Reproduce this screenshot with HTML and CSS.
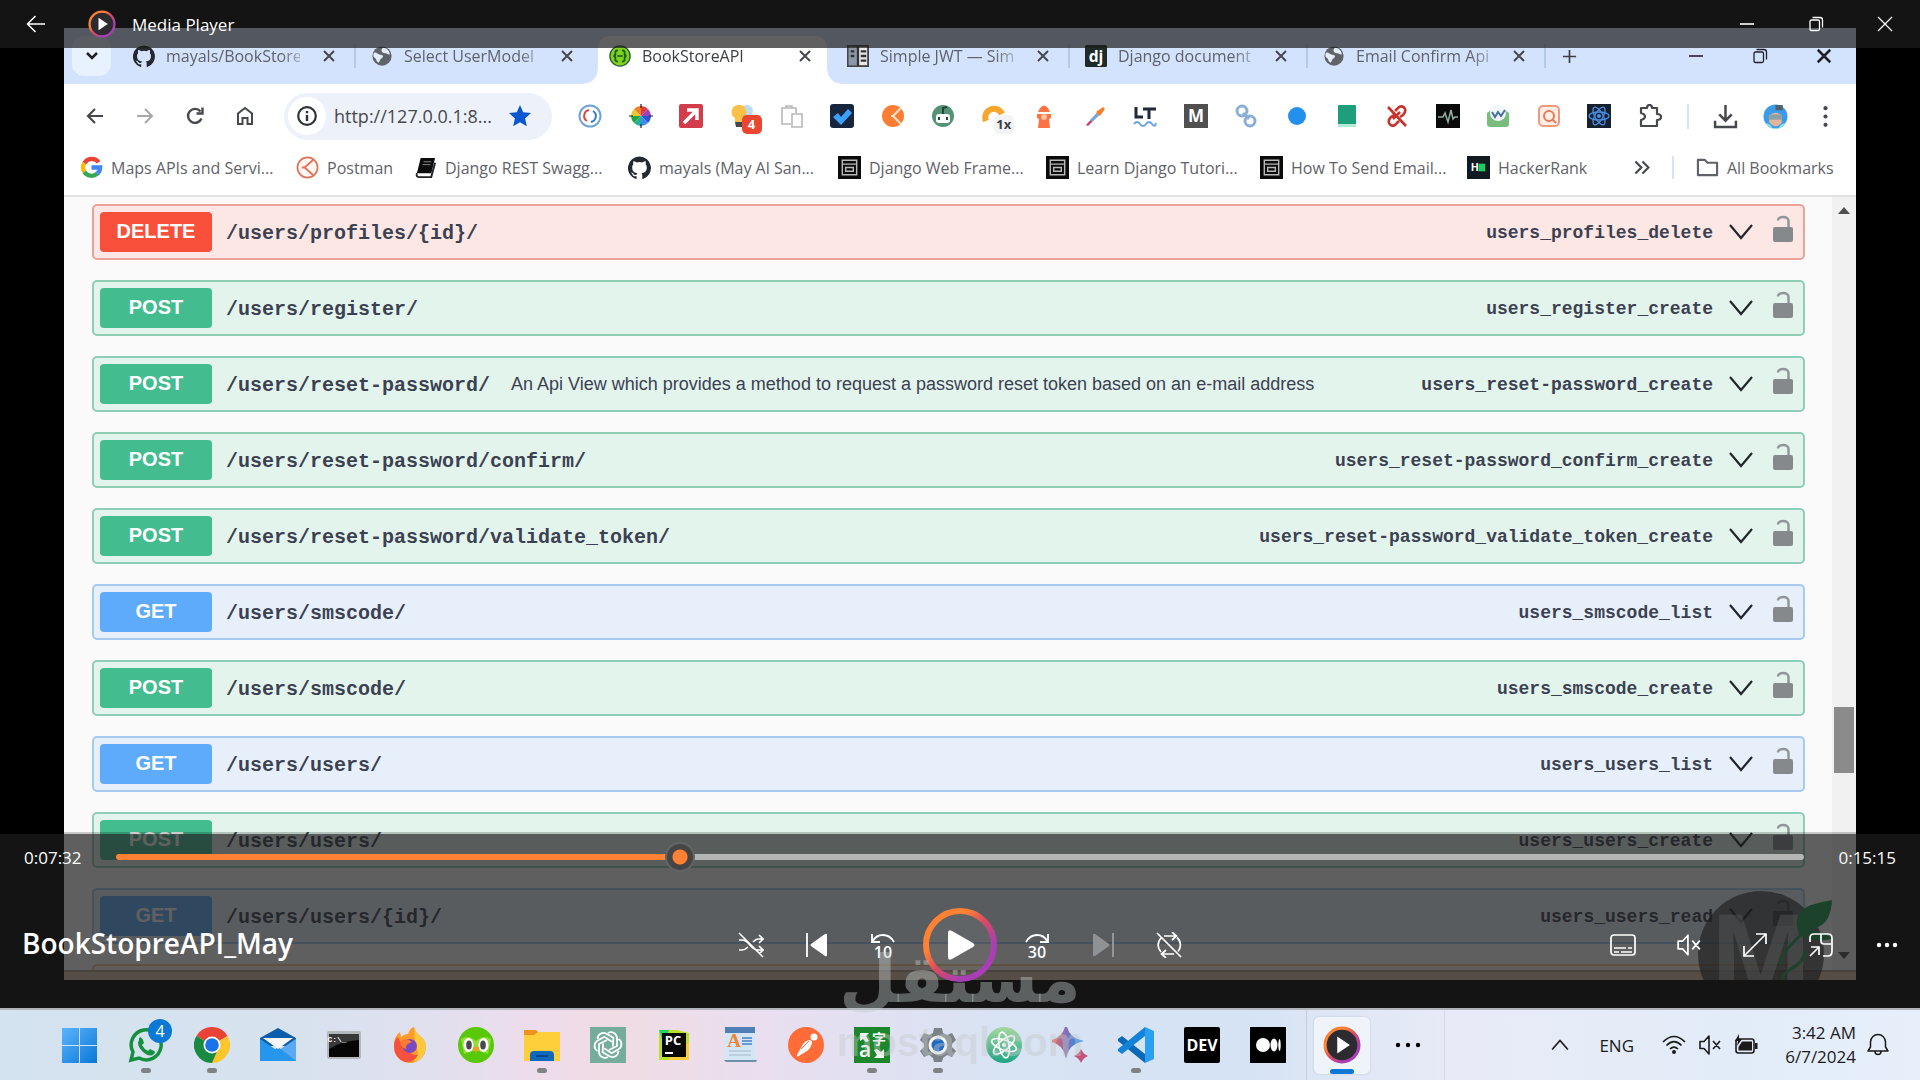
FILE: index.html
```
<!DOCTYPE html>
<html lang="en">
<head>
  <meta charset="UTF-8">
  <meta name="viewport" content="width=device-width, initial-scale=1">
  <title>Media Player</title>
  <link rel="stylesheet" href="styles.css">
</head>
<body>

  <!-- shared icons -->
  <svg class="defs" aria-hidden="true">
    <defs>
      <linearGradient id="ring" x1="0" y1="0" x2="1" y2="1">
        <stop offset="0.3" stop-color="#ff8133"/>
        <stop offset="0.5" stop-color="#d94a62"/>
        <stop offset="0.75" stop-color="#a83fb5"/>
      </linearGradient>
      <linearGradient id="gem" x1="0" y1="0" x2="1" y2="0">
        <stop offset="0" stop-color="#f0624f"/>
        <stop offset="0.5" stop-color="#8470b4"/>
        <stop offset="1" stop-color="#2391f0"/>
      </linearGradient>
      <linearGradient id="atomBg" x1="0" y1="0" x2="0" y2="1">
        <stop offset="0" stop-color="#a6d8a0"/>
        <stop offset="1" stop-color="#1fa585"/>
      </linearGradient>
      <linearGradient id="winBg" x1="0" y1="0" x2="1" y2="1">
        <stop offset="0" stop-color="#5bb4ff"/>
        <stop offset="1" stop-color="#0a78d4"/>
      </linearGradient>
      <symbol id="close" viewBox="0 0 16 16"><path d="M3 3l10 10M13 3L3 13" fill="none" stroke="currentColor" stroke-width="2"/></symbol>
      <symbol id="github" viewBox="0 0 24 24"><path fill="#24292f" d="M12 .5a12 12 0 0 0-3.8 23.4c.6.1.8-.3.8-.6v-2.2c-3.3.7-4-1.4-4-1.4-.6-1.4-1.3-1.8-1.3-1.8-1.1-.7.1-.7.1-.7 1.2.1 1.8 1.2 1.8 1.2 1.1 1.8 2.8 1.3 3.5 1 .1-.8.4-1.3.8-1.6-2.7-.3-5.5-1.3-5.5-5.9 0-1.3.5-2.4 1.2-3.2-.1-.3-.5-1.5.1-3.2 0 0 1-.3 3.3 1.2a11.500 11.500 0 0 1 6 0c2.3-1.5 3.3-1.2 3.3-1.2.6 1.7.2 2.9.1 3.2.8.8 1.2 1.9 1.2 3.2 0 4.6-2.8 5.6-5.5 5.9.4.4.8 1.1.8 2.2v3.300c0 .3.200.7.8.6A12 12 0 0 0 12 .5z"/></symbol>
      <symbol id="globe" viewBox="0 0 24 24"><circle cx="12" cy="12" r="10.5" fill="#5f6368"/><path d="M4 8c3 1 5 3 8 3 2 1 1 3-1 4s-1 4-3 4-2-4-4-5-2-4 0-6zM13 3c4 0 7 3 7.5 7-2 1-3-1-5-1s-4-1-4-3 1-2 1.500-3z" fill="#e3ecfb"/></symbol>
      <symbol id="window" viewBox="0 0 24 24"><rect width="24" height="24" fill="#0b0b0b"/><path d="M4.5 4.5h15v15h-15zM4.5 8.5h15M8 12h8v4H8z" fill="none" stroke="#b9b9b9" stroke-width="1.5"/></symbol>
      <symbol id="chevron" viewBox="0 0 24 24"><path d="M1 5l11 13L23 5" fill="none" stroke="#22262b" stroke-width="2.2"/></symbol>
      <symbol id="lock" viewBox="0 0 22 28"><path d="M6 5.5C6 1 16.500.5 16.5 6v6" fill="none" stroke="#8f9598" stroke-width="2.5"/><rect x="1" y="12" width="20" height="15" rx="2" fill="#85898c"/></symbol>
      <symbol id="player" viewBox="0 0 36 36"><circle cx="18" cy="18" r="16" fill="#2b2b30" stroke="url(#ring)" stroke-width="3"/><path d="M13.5 10v16l12-8z" fill="#fff"/></symbol>
      <symbol id="mute" viewBox="0 0 24 24"><path d="M2 8.5h4l5-5.500v18l-5-5.500H2zM15 8l7 8M22 8l-7 8" fill="none" stroke="currentColor" stroke-width="1.6" stroke-linejoin="round"/></symbol>
      <symbol id="restore" viewBox="0 0 16 16"><path d="M2 5.5q0-1.500 1.500-1.500H10q1.500 0 1.500 1.500V13q0 1.500-1.500 1.500H3.5Q2 14.500 2 13zM4.500 1.500H12q2.500 0 2.500 2.500v7.500" fill="none" stroke="currentColor" stroke-width="1.3"/></symbol>
      <symbol id="min" viewBox="0 0 16 16"><path d="M1 8h14" stroke="currentColor" stroke-width="1.6"/></symbol>
    </defs>
  </svg>

  <main class="player">
    <section class="video">
      <div class="tabstrip">
        <button class="tab-search" aria-label="Search tabs"><svg viewBox="0 0 16 16"><path d="M3 5l5 5 5-5" fill="none" stroke="#202124" stroke-width="2.5"/></svg></button>
        <div class="tabs">
          <div class="tab"><svg><use href="#github"/></svg><span>mayals/BookStore/</span><button aria-label="Close tab"><svg><use href="#close"/></svg></button></div>
          <div class="tab no-sep"><svg><use href="#globe"/></svg><span>Select UserModel f</span><button aria-label="Close tab"><svg><use href="#close"/></svg></button></div>
          <div class="tab active"><svg viewBox="0 0 24 24"><circle cx="12" cy="12" r="11" fill="#7ed321" stroke="#2e5a2e" stroke-width="1.5"/><path d="M9 6q-2.500 0-2 3 .3 2.500-2 3 2.300.5 2 3-.5 3 2 3M15 6q2.500 0 2 3-.3 2.500 2 3-2.300.5-2 3 .5 3-2 3M10 12h.1M12 12h.1M14 12h.1" fill="none" stroke="#1d5c1d" stroke-width="2" stroke-linecap="round"/></svg><span>BookStoreAPI</span><button aria-label="Close tab"><svg><use href="#close"/></svg></button></div>
          <div class="tab"><svg viewBox="0 0 24 24"><rect x="1" y="1" width="22" height="22" fill="#e8e8e8" stroke="#444" stroke-width="2"/><path d="M2 2h9v20H2z" fill="#8e97a8"/><path d="M12 1v22M4 7h4M4 12h4M15 7h6M15 12h6M15 17h6" stroke="#333" stroke-width="2.5"/></svg><span>Simple JWT — Simp</span><button aria-label="Close tab"><svg><use href="#close"/></svg></button></div>
          <div class="tab"><svg viewBox="0 0 24 24"><rect width="24" height="24" rx="2" fill="#1d2a27"/><text x="12" y="18" class="icon-text" font-size="17" fill="#fff">dj</text></svg><span>Django document.</span><button aria-label="Close tab"><svg><use href="#close"/></svg></button></div>
          <div class="tab"><svg><use href="#globe"/></svg><span>Email Confirm Api</span><button aria-label="Close tab"><svg><use href="#close"/></svg></button></div>
          <button class="new-tab" aria-label="New tab"><svg viewBox="0 0 16 16"><path d="M8 1v14M1 8h14" stroke="#3c4043" stroke-width="1.8"/></svg></button>
        </div>
        <div class="chrome-controls">
          <button aria-label="Minimize browser"><svg><use href="#min"/></svg></button>
          <button aria-label="Restore browser"><svg><use href="#restore"/></svg></button>
          <button aria-label="Close browser"><svg><use href="#close"/></svg></button>
        </div>
      </div>

      <div class="toolbar">
        <div class="nav">
          <button aria-label="Back"><svg viewBox="0 0 20 20"><path d="M18 10H3M10 3l-7 7 7 7" fill="none" stroke="#45494d" stroke-width="2.2"/></svg></button>
          <button aria-label="Forward"><svg viewBox="0 0 20 20"><path d="M2 10h15M10 3l7 7-7 7" fill="none" stroke="#a6a9ac" stroke-width="2"/></svg></button>
          <button aria-label="Reload"><svg viewBox="0 0 20 20"><path d="M16.5 12.5A7 7 0 1 1 15.5 5.5M17.5 1.5v6h-6" fill="none" stroke="#45494d" stroke-width="2.4"/></svg></button>
          <button aria-label="Home"><svg viewBox="0 0 20 20"><path d="M3 18V7.5L10 2l7 5.500V18h-4.500v-6h-5v6z" fill="none" stroke="#45494d" stroke-width="2"/></svg></button>
        </div>
        <div class="address">
          <span class="site-info"><svg viewBox="0 0 20 20"><circle cx="10" cy="10" r="8" fill="none" stroke="#303336" stroke-width="2"/><path d="M10 9v5.500M10 5.500v2" stroke="#303336" stroke-width="2.2"/></svg></span>
          <input type="text" value="http://127.0.0.1:8..." aria-label="Address">
          <svg class="star" viewBox="0 0 24 24"><path d="M12 1l3.200 7.300 7.800.8-5.900 5.300 1.700 7.800-6.800-4-6.800 4 1.700-7.800L1 9.100l7.800-.8z" fill="#0b57d0"/></svg>
        </div>
        <div class="extensions">
          <svg viewBox="0 0 24 24"><circle cx="12" cy="12" r="10.5" fill="#fff" stroke="#6fa3d6" stroke-width="2"/><path d="M11 6a6 6 0 0 0-2 11" fill="none" stroke="#d84a3c" stroke-width="2"/><path d="M13 18a6 6 0 0 0 2-11" fill="none" stroke="#3579c4" stroke-width="2"/></svg>
          <svg viewBox="0 0 24 24"><path d="M12 12V2a10 10 0 0 1 7 3z" fill="#e23b3b"/><path d="M12 12l7-7a10 10 0 0 1 3 7z" fill="#9c3fc0"/><path d="M12 12h10a10 10 0 0 1-3 7z" fill="#2b55d8"/><path d="M12 12l7 7a10 10 0 0 1-7 3z" fill="#3a8ef0"/><path d="M12 12v10a10 10 0 0 1-7-3z" fill="#25b1a0"/><path d="M12 12l-7 7a10 10 0 0 1-3-7z" fill="#2aa53a"/><path d="M12 12H2a10 10 0 0 1 3-7z" fill="#e9c92f"/><path d="M12 12L5 5a10 10 0 0 1 7-3z" fill="#f2802a"/><path d="M12 0v4M12 20v4M0 12h4M20 12h4" stroke="#222" stroke-width="1.2"/></svg>
          <svg viewBox="0 0 24 24"><rect width="24" height="24" rx="2" fill="#d23c4b"/><path d="M5 19L17 7M8 6h10v10" fill="none" stroke="#fff" stroke-width="3.5"/></svg>
          <span class="badged"><svg viewBox="0 0 24 24"><circle cx="17" cy="7" r="6" fill="#bcdcf3"/><path d="M9 1a7 7 0 0 1 4 13v4H5v-4A7 7 0 0 1 9 1z" fill="#fbc04a"/><path d="M5 18h8v5H6z" fill="#44474c"/></svg><b>4</b></span>
          <svg viewBox="0 0 24 24"><path d="M11 20H2V4h14v5M6 4V2h6v2M12 10h10v13H12z" fill="none" stroke="#b8b8b8" stroke-width="1.6"/></svg>
          <svg viewBox="0 0 24 24"><rect width="24" height="24" rx="3" fill="#18263d"/><path d="M3 13l5-4 3 4 7-8 4 4-11 12z" fill="#3da0ff"/></svg>
          <svg viewBox="0 0 24 24"><circle cx="12" cy="12" r="11" fill="#ff7d33"/><path d="M20 4l-8 8 8 8M12 12h-2" fill="none" stroke="#ffe3d0" stroke-width="2"/></svg>
          <svg viewBox="0 0 24 24"><circle cx="12" cy="12" r="11" fill="#559377"/><rect x="5" y="10" width="14" height="9" rx="3" fill="#fff"/><path d="M12 10V4l4-1M8 13v3M16 13v3" fill="none" stroke="#26433a" stroke-width="2"/></svg>
          <span class="badged light"><svg viewBox="0 0 24 24"><path d="M4 17a8.500 8.500 0 1 1 16-7" fill="none" stroke="#f7a52c" stroke-width="6"/></svg><b>1x</b></span>
          <svg viewBox="0 0 24 24"><path d="M8 4q4-5 8 0l2 4H6zM5 10h14v4l-2 1 1 9H6l1-9-2-1z" fill="#fb7344"/><circle cx="12" cy="13" r="3" fill="#ffc19a"/></svg>
          <svg viewBox="0 0 24 24"><path d="M3 21L14 9l2 2L5 22z" fill="#d4356b"/><path d="M7 16l7-7 2 2-7 7z" fill="#74a7d8"/><path d="M13 8l7-5 2 2-5 7z" fill="#f1812a"/></svg>
          <svg viewBox="0 0 24 24"><path d="M3 3v10h7M10 5h13M16 5v10" fill="none" stroke="#1f2937" stroke-width="3"/><path d="M1 20q3-4 6 0t6 0 6 0 4-1" fill="none" stroke="#6aa5e3" stroke-width="2"/></svg>
          <svg viewBox="0 0 24 24"><rect width="24" height="24" fill="#505050"/><text x="12" y="18" class="icon-text" font-size="17" fill="#fff">M</text></svg>
          <svg viewBox="0 0 24 24"><circle cx="8" cy="7" r="5" fill="none" stroke="#8aaed6" stroke-width="3"/><circle cx="16" cy="17" r="5" fill="none" stroke="#8aaed6" stroke-width="3"/><path d="M9 9l6 6" stroke="#8aaed6" stroke-width="3"/></svg>
          <svg viewBox="0 0 24 24"><circle cx="12" cy="12" r="9" fill="#2490ee"/></svg>
          <svg viewBox="0 0 24 24"><rect x="3" y="1" width="18" height="22" rx="1" fill="#1d9f7c"/><path d="M3 20h18v3H3z" fill="#b3ead6"/></svg>
          <svg viewBox="0 0 24 24"><path d="M10 7l4-4q4-2 6 2 1 3-2 6l-3 2M14 17l-4 4q-4 2-6-2-1-3 2-6l3-2M8 15l7-7M3 3l18 19" fill="none" stroke="#c5332b" stroke-width="2.6"/></svg>
          <svg viewBox="0 0 24 24"><rect width="24" height="24" fill="#0a0a0a"/><path d="M2 13h5l2-4 3 9 3-12 2 9 2-2h3" fill="none" stroke="#8fb3a0" stroke-width="1.5"/></svg>
          <svg viewBox="0 0 24 24"><path d="M1 9l11-8 11 8v11q0 3-3 3H4q-3 0-3-3z" fill="#79bd7c"/><circle cx="12" cy="9" r="8" fill="#f0f6fa"/><path d="M6 8l3 5 3-5 3 4 4-6" fill="none" stroke="#4a6f9d" stroke-width="2"/></svg>
          <svg viewBox="0 0 24 24"><rect x="2" y="2" width="20" height="20" rx="4" fill="#fff0e6" stroke="#f09a80" stroke-width="2"/><circle cx="12" cy="12" r="5" fill="none" stroke="#e8795f" stroke-width="2"/><path d="M15 15l4 4" stroke="#e8795f" stroke-width="2"/></svg>
          <svg viewBox="0 0 24 24"><rect width="24" height="24" fill="#16202e"/><g fill="none" stroke="#4a91e8" stroke-width="1.3"><ellipse cx="12" cy="12" rx="10" ry="4"/><ellipse cx="12" cy="12" rx="10" ry="4" transform="rotate(60 12 12)"/><ellipse cx="12" cy="12" rx="10" ry="4" transform="rotate(120 12 12)"/></g><circle cx="12" cy="12" r="2" fill="#4a91e8"/></svg>
          <svg viewBox="0 0 24 24"><path d="M3 4h6q0-3 2.500-3T14 4h5v6q4 0 4 3t-4 3v6H3v-6q4-1 4-3.500T3 9z" fill="none" stroke="#45494d" stroke-width="2.2" stroke-linejoin="round"/></svg>
        </div>
        <div class="chrome-right">
          <svg viewBox="0 0 24 24"><path d="M12 1v14M6 10l6 6 6-6M2 16v6h20v-6" fill="none" stroke="#45494d" stroke-width="2.4"/></svg>
          <svg viewBox="0 0 24 24"><circle cx="12" cy="12" r="11.5" fill="#3b9be8"/><path d="M6 11q6-5 12 0v7q-6 7-12 0z" fill="#e2b49c"/><path d="M6 10h12v5H6z" fill="#8aa0a3"/><path d="M12 1h7v5h-7z" fill="#50616d"/><path d="M2 18q5 1 7 5h6q2-4 7-5-3 6-10 6T2 18z" fill="#8be0e8"/></svg>
          <svg viewBox="0 0 24 24"><circle cx="12" cy="4" r="2" fill="#45494d"/><circle cx="12" cy="12" r="2" fill="#45494d"/><circle cx="12" cy="20" r="2" fill="#45494d"/></svg>
        </div>
      </div>

      <nav class="bookmarks">
        <a href="#"><svg viewBox="0 0 24 24"><g fill="none" stroke-width="4.5"><path d="M19.5 6.5A9 9 0 0 0 4.5 7.5" stroke="#ea4335"/><path d="M4.5 7.5a9 9 0 0 0 0 9" stroke="#fbbc05"/><path d="M4.5 16.5a9 9 0 0 0 13.500 2" stroke="#34a853"/><path d="M18 18.500q3-2.500 3-6.500h-9" stroke="#4285f4"/></g></svg><span>Maps APIs and Servi...</span></a>
        <a href="#"><svg viewBox="0 0 24 24"><circle cx="12" cy="12" r="10.5" fill="#fff7f3" stroke="#e0735a" stroke-width="1.8"/><path d="M18 4l-9 8 9 8M9 12H6" fill="none" stroke="#e0735a" stroke-width="2"/></svg><span>Postman</span></a>
        <a href="#"><svg viewBox="0 0 24 24"><path d="M7 2h15l-4 16H3z" fill="#0c0c0c"/><path d="M3 18q-1 4 2 4h13l4-15" fill="none" stroke="#222" stroke-width="2"/><path d="M10 6h8M9 9h8" stroke="#888"/></svg><span>Django REST Swagg...</span></a>
        <a href="#"><svg><use href="#github"/></svg><span>mayals (May Al San...</span></a>
        <a href="#"><svg><use href="#window"/></svg><span>Django Web Frame...</span></a>
        <a href="#"><svg><use href="#window"/></svg><span>Learn Django Tutori...</span></a>
        <a href="#"><svg><use href="#window"/></svg><span>How To Send Email...</span></a>
        <a href="#"><svg viewBox="0 0 24 24"><rect width="24" height="24" fill="#101a20"/><text x="8" y="16" class="icon-text" font-size="11" fill="#fff">H</text><rect x="12" y="8" width="7" height="8" fill="#1ecb5f"/></svg><span>HackerRank</span></a>
        <button aria-label="More bookmarks"><svg viewBox="0 0 16 16"><path d="M2 3l5 5-5 5M8 3l5 5-5 5" fill="none" stroke="#45494d" stroke-width="1.8"/></svg></button>
        <a href="#" class="all"><svg viewBox="0 0 24 24"><path d="M2 4h7l3 3h10v13H2z" fill="none" stroke="#5f6368" stroke-width="2.2" stroke-linejoin="round"/></svg><span>All Bookmarks</span></a>
      </nav>

      <div class="page">
        <div class="operations">
          <div class="op delete"><span class="method">DELETE</span><span class="path">/users/profiles/{id}/</span><span class="op-id">users_profiles_delete</span><button aria-label="Expand"><svg><use href="#chevron"/></svg></button><button class="auth" aria-label="Authorize"><svg><use href="#lock"/></svg></button></div>
          <div class="op post"><span class="method">POST</span><span class="path">/users/register/</span><span class="op-id">users_register_create</span><button aria-label="Expand"><svg><use href="#chevron"/></svg></button><button class="auth" aria-label="Authorize"><svg><use href="#lock"/></svg></button></div>
          <div class="op post"><span class="method">POST</span><span class="path">/users/reset-password/</span><span class="desc">An Api View which provides a method to request a password reset token based on an e-mail address</span><span class="op-id">users_reset-password_create</span><button aria-label="Expand"><svg><use href="#chevron"/></svg></button><button class="auth" aria-label="Authorize"><svg><use href="#lock"/></svg></button></div>
          <div class="op post"><span class="method">POST</span><span class="path">/users/reset-password/confirm/</span><span class="op-id">users_reset-password_confirm_create</span><button aria-label="Expand"><svg><use href="#chevron"/></svg></button><button class="auth" aria-label="Authorize"><svg><use href="#lock"/></svg></button></div>
          <div class="op post"><span class="method">POST</span><span class="path">/users/reset-password/validate_token/</span><span class="op-id">users_reset-password_validate_token_create</span><button aria-label="Expand"><svg><use href="#chevron"/></svg></button><button class="auth" aria-label="Authorize"><svg><use href="#lock"/></svg></button></div>
          <div class="op get"><span class="method">GET</span><span class="path">/users/smscode/</span><span class="op-id">users_smscode_list</span><button aria-label="Expand"><svg><use href="#chevron"/></svg></button><button class="auth" aria-label="Authorize"><svg><use href="#lock"/></svg></button></div>
          <div class="op post"><span class="method">POST</span><span class="path">/users/smscode/</span><span class="op-id">users_smscode_create</span><button aria-label="Expand"><svg><use href="#chevron"/></svg></button><button class="auth" aria-label="Authorize"><svg><use href="#lock"/></svg></button></div>
          <div class="op get"><span class="method">GET</span><span class="path">/users/users/</span><span class="op-id">users_users_list</span><button aria-label="Expand"><svg><use href="#chevron"/></svg></button><button class="auth" aria-label="Authorize"><svg><use href="#lock"/></svg></button></div>
          <div class="op post"><span class="method">POST</span><span class="path">/users/users/</span><span class="op-id">users_users_create</span><button aria-label="Expand"><svg><use href="#chevron"/></svg></button><button class="auth" aria-label="Authorize"><svg><use href="#lock"/></svg></button></div>
          <div class="op get"><span class="method">GET</span><span class="path">/users/users/{id}/</span><span class="op-id">users_users_read</span><button aria-label="Expand"><svg><use href="#chevron"/></svg></button><button class="auth" aria-label="Authorize"><svg><use href="#lock"/></svg></button></div>
          <div class="op put"></div>
        </div>
        <div class="scrollbar">
          <svg viewBox="0 0 12 8"><path d="M0 8l6-7 6 7z" fill="#505050"/></svg>
          <div class="scroll-thumb"></div>
          <svg viewBox="0 0 12 8"><path d="M0 0l6 7 6-7z" fill="#505050"/></svg>
        </div>
      </div>
      <div class="video-edge"></div>

      <svg class="monogram" viewBox="0 0 144 90">
        <circle cx="66" cy="64" r="63" fill="#15171a" fill-opacity="0.62"/>
        <text x="66" y="103" class="icon-text" font-size="110" fill="#d8dadc" fill-opacity="0.5">M</text>
        <path d="M104 44q-8-22 12-29 9-3 21-5-1 22-14 27-3 1-6 3 11 3 22 8-12 4-24 1-7-1-11-5z" fill="#1c9a50"/>
        <path d="M106 45q-22 20-21 30M110 61q0 10-14 18-10 6-9 12" fill="none" stroke="#1c9a50" stroke-width="3"/>
      </svg>
    </section>

    <header class="titlebar">
      <button class="back" aria-label="Back"><svg viewBox="0 0 20 20"><path d="M19 10H2M9.5 2L1.5 10l8 8" fill="none" stroke="#fff" stroke-width="1.5"/></svg></button>
      <svg class="app-logo"><use href="#player"/></svg>
      <span class="app-name">Media Player</span>
      <div class="window-controls">
        <button aria-label="Minimize"><svg><use href="#min"/></svg></button>
        <button aria-label="Restore"><svg><use href="#restore"/></svg></button>
        <button aria-label="Close"><svg viewBox="0 0 16 16"><path d="M1 1l14 14M15 1L1 15" stroke="#fff" stroke-width="1.3"/></svg></button>
      </div>
    </header>

    <footer class="controls">
      <div class="seek">
        <label for="seek">0:07:32</label>
        <input type="range" id="seek" min="0" max="1000" value="331">
        <span>0:15:15</span>
      </div>
      <div class="buttons">
        <h1>BookStopreAPI_May</h1>
        <div class="group">
          <button aria-label="Shuffle off"><svg viewBox="0 0 26 26"><path d="M1 8h3q4 0 8 5t8 5h4M1 18h3q3 0 6-3M15 10q3-3 5-3h4M21 3l4 4-4 4M21 14l4 4-4 4M1 1l24 24" fill="none" stroke="#fff" stroke-width="1.7"/></svg></button>
          <button aria-label="Previous"><svg viewBox="0 0 26 26"><path d="M3 1v24" stroke="#fff" stroke-width="1.8"/><path d="M23 3v20q0 2-2 1L7 14q-1-1 0-2L21 2q2-1 2 1z" fill="#fff"/></svg></button>
          <button aria-label="Skip back 10 seconds"><svg viewBox="0 0 26 26"><path d="M2 2v8h8M3 9q3-6 10-6t11 7" fill="none" stroke="#fff" stroke-width="1.8"/><text x="13" y="26" font-size="16" class="icon-text thin" fill="#fff">10</text></svg></button>
          <button class="play" aria-label="Play"><svg viewBox="0 0 74 74"><circle cx="37" cy="37" r="34" fill="#fff" fill-opacity="0.05" stroke="url(#ring)" stroke-width="6"/><path d="M25 25q0-4 4-2l21 12q3 2 0 4L29 51q-4 2-4-2z" fill="#fff"/></svg></button>
          <button aria-label="Skip forward 30 seconds"><svg viewBox="0 0 26 26"><path d="M24 2v8h-8M23 9q-3-6-10-6T2 10" fill="none" stroke="#fff" stroke-width="1.8"/><text x="13" y="26" font-size="16" class="icon-text thin" fill="#fff">30</text></svg></button>
          <button aria-label="Next" disabled><svg viewBox="0 0 26 26"><path d="M23 1v24" stroke="#9a9c9e" stroke-width="1.8"/><path d="M3 3v20q0 2 2 1l14-10q1-1 0-2L5 2Q3 1 3 3z" fill="#8f9294"/></svg></button>
          <button aria-label="Repeat off"><svg viewBox="0 0 26 26"><path d="M8 4h12M16 0l4.500 4L16 8M18 22H7M10 18l-4.500 4 4.500 4M21 5.500a10 10 0 0 1 1 14M5 20A10 10 0 0 1 5 6M1 1l24 24" fill="none" stroke="#fff" stroke-width="1.7"/></svg></button>
        </div>
        <div class="group end">
          <button aria-label="Subtitles"><svg viewBox="0 0 26 26"><rect x="1" y="3" width="24" height="20" rx="3" fill="none" stroke="#fff" stroke-width="1.7"/><path d="M4 16h12M18 16h4M4 20h5M11 20h11" stroke="#fff" stroke-width="1.6"/></svg></button>
          <button aria-label="Unmute"><svg><use href="#mute"/></svg></button>
          <button aria-label="Full screen"><svg viewBox="0 0 26 26"><path d="M2 24L24 2M14 2h10v10M2 14v10h10" fill="none" stroke="#fff" stroke-width="1.7"/></svg></button>
          <button aria-label="Mini player"><svg viewBox="0 0 26 26"><path d="M2 10V6q0-4 4-4h14q4 0 4 4v13q0 5-4 5h-5M13 2v7q0 3 3 3h8M2 24l9-9M3 15h8v8" fill="none" stroke="#fff" stroke-width="1.7"/></svg></button>
          <button aria-label="More options"><svg viewBox="0 0 26 26"><circle cx="5" cy="13" r="2.2" fill="#fff"/><circle cx="13" cy="13" r="2.2" fill="#fff"/><circle cx="21" cy="13" r="2.2" fill="#fff"/></svg></button>
        </div>
      </div>
    </footer>
  </main>

  <div class="taskbar">
    <div class="apps">
      <button aria-label="Start"><svg viewBox="0 0 36 36"><path d="M0 1h17v17H0zM18 1h17v17H18zM0 19h17v17H0zM18 19h17v17H18z" fill="url(#winBg)"/></svg></button>
      <button class="running badge" aria-label="WhatsApp"><svg viewBox="0 0 36 36"><path d="M3 33l2-8a15 15 0 1 1 6 6z" fill="none" stroke="#15903f" stroke-width="3.5"/><path d="M11 11q2-2 4 2l1 3-2 2q2 4 6 6l2-2 4 2q2 1 0 3-4 4-11-2-7-7-4-12z" fill="#15903f"/></svg><b>4</b></button>
      <button class="running" aria-label="Chrome"><svg viewBox="0 0 36 36"><path d="M18 18L2.4 9a18 18 0 0 1 31.200 0z" fill="#ea4335"/><path d="M18 18L33.6 9A18 18 0 0 1 18 36z" fill="#fbc62d"/><path d="M18 18L2.4 9A18 18 0 0 0 18 36l6-14z" fill="#188a42"/><circle cx="18" cy="18" r="8.5" fill="#fff"/><circle cx="18" cy="18" r="6.8" fill="#1a73e8"/></svg></button>
      <button aria-label="Mail"><svg viewBox="0 0 36 36"><path d="M0 11L18 1l18 10v8H0z" fill="#0b5cab"/><path d="M0 12l18 12 18-12v22H0z" fill="#2596ec"/><path d="M18 24l18-12v22z" fill="#5aa9f2"/><path d="M0 34l18-14 18 14z" fill="#2596ec"/><path d="M3 11h30L18 22z" fill="#f5f5f5"/></svg></button>
      <button aria-label="Terminal"><svg viewBox="0 0 36 36"><rect x="1" y="4" width="34" height="28" rx="2" fill="#b5b8ba"/><rect x="3" y="7" width="30" height="23" fill="#060606"/><path d="M3 7h30v6q-18 1-30 9z" fill="#383838"/><text x="11" y="15" class="icon-text mono" font-size="8" fill="#fff">C:\_</text></svg></button>
      <button aria-label="Firefox"><svg viewBox="0 0 36 36"><path d="M2 19Q2 9 8 5l1 5q3-3 7-3 2-6 6-7 1 5 6 9 6 4 6 11A16 16 0 0 1 2 20z" fill="#ff9a2b"/><path d="M22 0q1 5 6 9 6 4 6 11a16 16 0 0 1-12 15q7-10 1-18z" fill="#ffc83c"/><path d="M2 19q0-6 4-9 2 7 9 9 2 10 11 9-5 8-13 7Q2 31 2 19z" fill="#f4513f"/><circle cx="18" cy="19" r="7" fill="#7a4ac0"/><path d="M8 14q7-4 12 1-7 2-6 7-6-2-6-8z" fill="#ff7a33"/></svg></button>
      <button aria-label="Duolingo"><svg viewBox="0 0 36 36"><circle cx="18" cy="18" r="18" fill="#58c80b"/><path d="M3 12q8-5 15 2 7-7 15-2l-3 15-12-4-12 4z" fill="#91de38"/><ellipse cx="10.5" cy="18" rx="5" ry="7" fill="#fff"/><ellipse cx="25.5" cy="18" rx="5" ry="7" fill="#fff"/><ellipse cx="11" cy="18" rx="2.8" ry="4.5" fill="#46484c"/><ellipse cx="25" cy="18" rx="2.8" ry="4.5" fill="#46484c"/><path d="M14.5 21q3.500-3 7 0l-3.500 5z" fill="#f49b2b"/></svg></button>
      <button class="running" aria-label="File Explorer"><svg viewBox="0 0 36 36"><path d="M0 3h12l3 3v6H0z" fill="#f0921e"/><path d="M0 8h10l4-3h22v29H0z" fill="#ffcf3b"/><path d="M6 34v-6q0-4 4-4h16q4 0 4 4v6z" fill="#1068bd"/><path d="M12 29h12" stroke="#0a4687" stroke-width="2"/></svg></button>
      <button aria-label="ChatGPT"><svg viewBox="0 0 36 36"><rect width="36" height="36" fill="#75ac9c"/><g fill="none" stroke="#fff" stroke-width="1.8"><path d="M18 6a6 6 0 0 1 9 5v8l-8 4"/><path d="M18 6a6 6 0 0 1 9 5v8l-8 4" transform="rotate(60 18 18)"/><path d="M18 6a6 6 0 0 1 9 5v8l-8 4" transform="rotate(120 18 18)"/><path d="M18 6a6 6 0 0 1 9 5v8l-8 4" transform="rotate(180 18 18)"/><path d="M18 6a6 6 0 0 1 9 5v8l-8 4" transform="rotate(240 18 18)"/><path d="M18 6a6 6 0 0 1 9 5v8l-8 4" transform="rotate(300 18 18)"/></g></svg></button>
      <button aria-label="PyCharm"><svg viewBox="0 0 36 36"><path d="M3 3h18l12 3v27H3z" fill="#b9e02f"/><path d="M3 3h10L8 18z" fill="#21d06b"/><path d="M12 33h21V15z" fill="#fbcb3a"/><rect x="6" y="6" width="24" height="24" fill="#080808"/><text x="17" y="18" class="icon-text" font-size="13" fill="#fff">PC</text><path d="M9 26h8" stroke="#fff" stroke-width="2"/></svg></button>
      <button aria-label="WordPad"><svg viewBox="0 0 36 36"><path d="M3 1h30v28l2 5H2l1-5z" fill="#d3e6f5"/><path d="M3 0h30v6H3z" fill="#4f7fb7"/><path d="M2 33h33l-1 2H4z" fill="#6f8fa8"/><text x="12" y="20" class="icon-text serif" font-size="19" fill="#ef8433">A</text><path d="M20 11h10M20 14h10M20 17h10" stroke="#4583c6" stroke-width="1.5"/><path d="M7 24h22M7 28h22" stroke="#a9b9c6"/></svg></button>
      <button aria-label="Postman"><svg viewBox="0 0 36 36"><circle cx="18" cy="18" r="18" fill="#ff6c37"/><path d="M9 28l6-11q2-3 6-4l3 1q0 6-5 10-5 3-10 6z" fill="#fff"/><circle cx="26" cy="10" r="3.5" fill="#fff"/><path d="M13 22l8-8" stroke="#ff6c37"/></svg></button>
      <button class="running" aria-label="Translator"><svg viewBox="0 0 36 36"><rect width="36" height="36" fill="#1c862c"/><text x="25" y="17" class="icon-text cjk" font-size="14" fill="#fff">字</text><text x="11" y="30" class="icon-text thin" font-size="21" fill="#fff">a</text><path d="M6 6h9l-3 3 3 5-3 1-3-3-3 2zM30 31H20l3-3-3-5 3-1 4 3 3-3z" fill="#fff"/></svg></button>
      <button class="running" aria-label="Settings"><svg viewBox="0 0 36 36"><path d="M14 1h8l1 5 4 2 5-2 4 7-4 4v3l4 4-4 6-5-2-4 3-1 4h-8l-1-4-4-3-5 2-4-6 4-4v-3L0 13l4-7 5 2 4-2z" fill="#7b8288"/><circle cx="18" cy="18" r="9.5" fill="#f3f5f7"/><circle cx="18" cy="18" r="6.5" fill="#2269c2"/></svg></button>
      <button aria-label="Atom"><svg viewBox="0 0 36 36"><circle cx="18" cy="18" r="18" fill="url(#atomBg)"/><g fill="none" stroke="#fff" stroke-width="1.6"><ellipse cx="18" cy="18" rx="13" ry="5" transform="rotate(20 18 18)"/><ellipse cx="18" cy="18" rx="13" ry="5" transform="rotate(80 18 18)"/><ellipse cx="18" cy="18" rx="13" ry="5" transform="rotate(140 18 18)"/></g><circle cx="18" cy="18" r="2" fill="#fff"/></svg></button>
      <button aria-label="Assistant"><svg viewBox="0 0 36 36"><path d="M14 0q3 11 14 14-11 3-14 14Q11 17 0 14 11 11 14 0z" fill="url(#gem)" stroke="url(#gem)" stroke-width="2"/><path d="M29 22q2 5 7 7-5 2-7 7-2-5-7-7 5-2 7-7z" fill="#c8507d"/></svg></button>
      <button class="running" aria-label="Visual Studio Code"><svg viewBox="0 0 36 36"><path d="M0 12l4-3 23 18v9L0 14z" fill="#0a68b8"/><path d="M0 24l4 3L27 9V0L0 22z" fill="#1283d8"/><path d="M27 0l9 4v28l-9 4z" fill="#2ba0f2"/></svg></button>
      <button aria-label="DEV"><svg viewBox="0 0 36 36"><rect width="36" height="36" rx="2" fill="#000"/><text x="18" y="24" class="icon-text" font-size="16" fill="#fff">DEV</text></svg></button>
      <button aria-label="Medium"><svg viewBox="0 0 36 36"><rect width="36" height="36" fill="#000"/><ellipse cx="13" cy="18" rx="7" ry="7" fill="#fff"/><ellipse cx="24" cy="18" rx="3.5" ry="6.5" fill="#fff"/><ellipse cx="29.5" cy="18" rx="1.2" ry="6" fill="#fff"/></svg></button>
    </div>
    <div class="pinned">
      <button class="current" aria-label="Media Player"><svg viewBox="0 0 36 36"><use href="#player"/></svg></button>
      <button class="overflow" aria-label="More apps"><svg viewBox="0 0 26 26"><circle cx="3" cy="13" r="2.2"/><circle cx="13" cy="13" r="2.2"/><circle cx="23" cy="13" r="2.2"/></svg></button>
    </div>
    <div class="tray">
      <button class="hidden-icons" aria-label="Show hidden icons"><svg viewBox="0 0 16 16"><path d="M1 12l7-8 7 8" fill="none" stroke="currentColor" stroke-width="1.5"/></svg></button>
      <button class="lang">ENG</button>
      <button class="status" aria-label="Network, sound, battery">
        <svg viewBox="0 0 24 24"><path d="M1 9q11-11 22 0M4.5 12.5q7.500-7.500 15 0M8 16q4-4 8 0" fill="none" stroke="currentColor" stroke-width="1.7"/><circle cx="12" cy="19" r="2" fill="currentColor"/></svg>
        <svg><use href="#mute"/></svg>
        <svg viewBox="0 0 24 24"><rect x="2" y="6" width="18" height="14" rx="2.5" fill="none" stroke="currentColor" stroke-width="1.6"/><path d="M8 8.5h10v9H4.500V14zM21 10h2.500v6H21zM5 1L1 8h3l-1 5 5-7H5z" fill="currentColor"/></svg>
      </button>
      <button class="clock"><span>3:42 AM</span><span>6/7/2024</span></button>
      <button class="bell" aria-label="Notifications"><svg viewBox="0 0 24 24"><path d="M2 18h20l-2.500-4V9a7.500 7.500 0 0 0-15 0v5zM9 18.500q0 3 3 3t3-3" fill="none" stroke="currentColor" stroke-width="1.5" stroke-linejoin="round"/></svg></button>
    </div>
  </div>

  <div class="watermark">
    <span class="ar" lang="ar" dir="rtl">مستقل</span>
    <span class="en">mostaql.com</span>
  </div>

</body>
</html>
```
FILE: styles.css
```
* {
  box-sizing: border-box;
}
body {
  margin: 0;
  height: 100vh;
  display: flex;
  flex-direction: column;
  overflow: hidden;
  position: relative;
  background: #000;
  color: #fff;
  font-family: "Open Sans", "Noto Sans", sans-serif;
  font-size: 16px;
}
button {
  padding: 0;
  border: none;
  background: none;
  color: inherit;
  font: inherit;
  display: flex;
  align-items: center;
  justify-content: center;
}
a {
  color: inherit;
  text-decoration: none;
}
svg {
  display: block;
  flex: none;
}
.defs {
  position: absolute;
  width: 0;
  height: 0;
}
.icon-text {
  font-family: "Open Sans", sans-serif;
  font-weight: bold;
  text-anchor: middle;
}
.icon-text.thin {
  font-weight: 600;
}
.icon-text.mono {
  font-family: "Liberation Mono", monospace;
}
.icon-text.serif {
  font-family: "Liberation Serif", serif;
}
.icon-text.cjk {
  font-family: "Noto Sans CJK SC", sans-serif;
}

/* player window */
.player {
  flex: 1;
  min-height: 0;
  display: flex;
  position: relative;
  padding: 28px 64px;
}
.video {
  flex: 1;
  min-width: 0;
  display: flex;
  flex-direction: column;
  overflow: hidden;
  position: relative;
  background: #fff;
  color: #5f6368;
}

/* browser tabs */
.tabstrip {
  height: 56px;
  flex: none;
  display: flex;
  background: #d3e3fd;
  padding-left: 8px;
}
.tab-search {
  width: 39px;
  height: 40px;
  margin: 8px 11px 0 0;
  border-radius: 12px;
  background: #e8f1fe;
}
.tab-search svg {
  width: 16px;
  height: 16px;
}
.tabs {
  flex: 1;
  display: flex;
  padding-top: 8px;
}
.tab {
  flex: 0 1 238px;
  min-width: 0;
  display: flex;
  align-items: center;
  gap: 11px;
  padding: 0 13px 8px 11px;
  position: relative;
}
.tab > svg {
  width: 22px;
  height: 22px;
}
.tab span {
  flex: 1;
  min-width: 0;
  overflow: hidden;
  white-space: nowrap;
  -webkit-mask-image: linear-gradient(to right, #000 115px, transparent 145px);
  mask-image: linear-gradient(to right, #000 115px, transparent 145px);
}
.tab button {
  width: 36px;
  height: 24px;
  color: #45494d;
}
.tab button svg {
  width: 16px;
  height: 16px;
}
.tab::after {
  content: "";
  position: absolute;
  right: 4px;
  top: 8px;
  height: 24px;
  border-right: 2px solid #b3c9e6;
}
.tab.no-sep::after {
  display: none;
}
.tab.active {
  color: #3c4043;
}
.tab.active::before {
  content: "";
  position: absolute;
  z-index: 0;
  top: 0;
  bottom: 0;
  left: 0;
  right: 9px;
  background: #fff;
  border-radius: 12px 12px 0 0;
}
.tab.active > * {
  position: relative;
}
/* flared feet of the active tab */
.tab.active::after {
  top: auto;
  bottom: 0;
  left: -14px;
  right: -5px;
  height: 14px;
  border: none;
  background:
    radial-gradient(circle at 0 0, transparent 13px, #fff 14px) left / 14px 14px no-repeat,
    radial-gradient(circle at 100% 0, transparent 13px, #fff 14px) right / 14px 14px no-repeat;
}
.new-tab {
  width: 38px;
  height: 40px;
}
.new-tab svg {
  width: 15px;
  height: 15px;
}
.chrome-controls {
  display: flex;
  color: #202124;
}
.chrome-controls button {
  width: 64px;
  height: 56px;
}
.chrome-controls svg {
  width: 16px;
  height: 16px;
}
.chrome-controls button:last-child svg {
  width: 20px;
  height: 20px;
}

/* browser toolbar */
.toolbar {
  height: 64px;
  flex: none;
  display: flex;
  align-items: center;
}
.nav {
  display: flex;
  padding: 0 14px 0 6px;
}
.nav button {
  width: 50px;
  height: 40px;
}
.nav svg {
  width: 20px;
  height: 20px;
}
.address {
  width: 268px;
  height: 47px;
  display: flex;
  align-items: center;
  padding: 0 20px 0 4px;
  border-radius: 24px;
  background: #edf1fa;
}
.site-info {
  width: 38px;
  height: 38px;
  display: flex;
  align-items: center;
  justify-content: center;
  border-radius: 50%;
  background: #fff;
}
.site-info svg {
  width: 22px;
  height: 22px;
}
.address input {
  flex: 1;
  min-width: 0;
  padding: 0 0 0 8px;
  border: none;
  background: none;
  color: #45494d;
  font: inherit;
  font-size: 18px;
}
.address .star {
  width: 24px;
  height: 24px;
}
.extensions {
  flex: 1;
  display: grid;
  grid-template-columns: repeat(22, 1fr);
  justify-items: center;
  padding: 0 12px 0 13px;
}
.extensions svg {
  width: 24px;
  height: 24px;
}
.badged {
  position: relative;
}
.badged b {
  position: absolute;
  left: 12px;
  top: 11px;
  width: 20px;
  height: 19px;
  border-radius: 5px;
  background: #ea4630;
  color: #fff;
  font-size: 13px;
  line-height: 19px;
  text-align: center;
}
.badged.light b {
  background: #f1f3f4;
  color: #3c4043;
}
.chrome-right {
  display: flex;
  align-items: center;
  gap: 25px;
  padding: 0 18px 0 24px;
  border-left: 2px solid #d3e3fd;
}
.chrome-right svg {
  width: 25px;
  height: 25px;
}

/* bookmarks */
.bookmarks {
  height: 49px;
  flex: none;
  display: grid;
  grid-template-columns:
    minmax(0, 216fr) minmax(0, 118fr) minmax(0, 214fr) minmax(0, 210fr) minmax(0, 208fr)
    minmax(0, 214fr) minmax(0, 207fr) minmax(0, 145fr) minmax(0, 60fr) minmax(0, 184fr);
  align-items: center;
  padding: 0 0 8px 16px;
  border-bottom: 2px solid #e0e3e1;
}
.bookmarks a {
  display: flex;
  align-items: center;
  gap: 8px;
  white-space: nowrap;
}
.bookmarks a svg {
  width: 23px;
  height: 23px;
}
.bookmarks button svg {
  width: 19px;
  height: 19px;
}
.bookmarks .all {
  padding-left: 22px;
  border-left: 2px solid #d3e3fd;
}

/* api page */
.page {
  flex: 1;
  min-height: 0;
  display: flex;
  background: #fafafa;
}
.operations {
  flex: 1;
  min-width: 0;
  padding: 7px 27px 0 28px;
  overflow: hidden;
}
.op {
  height: 56px;
  margin-bottom: 20px;
  display: flex;
  align-items: center;
  padding: 0 9px 0 6px;
  border: 2px solid;
  border-radius: 5px;
  color: #3b4151;
}
.op.post {
  background: #e3f4ed;
  border-color: #8fcdb5;
}
.op.get {
  background: #e7f0fa;
  border-color: #a6cbf2;
}
.op.delete {
  background: #fce7e5;
  border-color: #e9a39c;
}
.op.put {
  background: #fbf1e6;
  border-color: #f3c491;
}
.method {
  width: 112px;
  height: 40px;
  flex: none;
  border-radius: 4px;
  color: #fff;
  font: bold 20px/39px "Liberation Sans", Arial, sans-serif;
  text-align: center;
}
.post .method {
  background: #43bc90;
}
.get .method {
  background: #5dabfa;
}
.delete .method {
  background: #f9503c;
}
.path {
  margin-left: 14px;
  padding-top: 2px;
  font: bold 20px "Liberation Mono", "Courier New", monospace;
}
.desc {
  margin-left: 21px;
  font: 18px "Liberation Sans", Arial, sans-serif;
}
.op-id {
  margin-left: auto;
  padding-top: 2px;
  font: bold 18px "Liberation Mono", "Courier New", monospace;
}
.op button {
  margin-left: 15px;
}
.op button svg {
  width: 26px;
  height: 24px;
}
.op button.auth {
  margin-left: 18px;
  padding-bottom: 6px;
}
.op button.auth svg {
  width: 22px;
  height: 28px;
}
.scrollbar {
  width: 24px;
  display: flex;
  flex-direction: column;
  align-items: center;
  padding: 9px 0 10px;
  background: #f1f1f2;
}
.scrollbar svg {
  width: 12px;
  height: 8px;
}
.scroll-thumb {
  width: 20px;
  height: 66px;
  margin: auto 0 179px;
  background: #8b8b8c;
}
.video-edge {
  height: 10px;
  flex: none;
  background: #d9c0a8;
  border-top: 2px solid #b09c88;
}
.monogram {
  position: absolute;
  right: 17px;
  bottom: 0;
  width: 144px;
  height: 90px;
}

/* player chrome over the video */
.titlebar {
  position: absolute;
  top: 0;
  left: 0;
  right: 0;
  height: 48px;
  display: flex;
  align-items: center;
  background: rgba(28, 28, 28, 0.7);
}
.back {
  width: 71px;
  height: 48px;
}
.back svg {
  width: 20px;
  height: 20px;
}
.app-logo {
  width: 28px;
  height: 28px;
  margin: 0 16px 0 17px;
}
.app-name {
  font-size: 17px;
}
.window-controls {
  display: flex;
  margin-left: auto;
  padding-right: 1px;
}
.window-controls button {
  width: 69px;
  height: 48px;
}
.window-controls svg {
  width: 16px;
  height: 16px;
}
.controls {
  position: absolute;
  left: 0;
  right: 0;
  bottom: 0;
  padding-bottom: 26px;
  border-top: 2px solid rgba(0, 0, 0, 0.2);
  background: rgba(28, 28, 28, 0.7);
  background-clip: padding-box;
}
.seek {
  height: 46px;
  display: grid;
  grid-template-columns: 92px 1fr 92px;
  align-items: center;
  margin: 0 24px 28px;
  font-size: 17px;
}
.seek span {
  text-align: right;
}
.seek input {
  -webkit-appearance: none;
  appearance: none;
  width: 100%;
  height: 30px;
  margin: 0;
  background: none;
}
.seek input::-webkit-slider-runnable-track {
  height: 6px;
  border-radius: 3px;
  background: linear-gradient(to right, #ff8133 33.4%, #b4b5b5 33.4%);
}
.seek input::-webkit-slider-thumb {
  -webkit-appearance: none;
  width: 30px;
  height: 30px;
  margin-top: -12px;
  border: 2px solid #626568;
  border-radius: 50%;
  background: radial-gradient(circle, #ff8133 7px, #454545 8px);
}
.buttons {
  display: grid;
  grid-template-columns: 1fr auto 1fr;
  align-items: center;
  padding: 0 7px;
}
.buttons h1 {
  margin: 0;
  padding: 0 0 4px 15px;
  font-size: 28px;
  font-weight: 600;
}
.group {
  display: flex;
  align-items: center;
  gap: 14px;
}
.group.end {
  justify-content: flex-end;
}
.group button {
  width: 52px;
  height: 52px;
}
.group svg {
  width: 26px;
  height: 26px;
}
.group .play,
.group .play svg {
  width: 74px;
  height: 74px;
}

/* taskbar */
.taskbar {
  height: 72px;
  flex: none;
  display: flex;
  padding-left: 47px;
  border-top: 2px solid #b0b4ba;
  background: linear-gradient(to right, #d3e3ef, #d8e2ef 16%, #e0e0ee 22%, #eedcec 28%, #f0dce3 32%, #e9dff0 40%, #d8e3f3 52%, #d5e3f4 65%, #e3e8f6 72%, #e8ebf7 76%, #e2ecf8 90%, #e6effa);
  color: #1b1b1b;
}
.apps {
  display: flex;
  padding-right: 5px;
}
.apps button {
  width: 66px;
  position: relative;
}
.apps svg {
  width: 36px;
  height: 36px;
}
.running::after {
  content: "";
  position: absolute;
  left: 28px;
  bottom: 7px;
  width: 10px;
  height: 5px;
  border-radius: 3px;
  background: #7f8386;
}
.badge b {
  position: absolute;
  left: 35px;
  top: 9px;
  width: 24px;
  height: 24px;
  border-radius: 50%;
  background: #0a78d4;
  color: #fff;
  font-size: 16px;
  font-weight: normal;
  line-height: 24px;
  text-align: center;
}
.pinned {
  width: 139px;
  display: flex;
  align-items: center;
  border-left: 1px solid #c5cfdc;
  border-right: 1px solid #d5dae4;
}
.current {
  width: 56px;
  height: 57px;
  margin: 0 25px 0 7px;
  position: relative;
  border-radius: 5px;
  background: #eff4fb;
  box-shadow: 0 0 2px #b5c0cc;
}
.current svg {
  width: 38px;
  height: 38px;
}
.current::after {
  content: "";
  position: absolute;
  left: 16px;
  bottom: 0;
  width: 24px;
  height: 5px;
  border-radius: 3px;
  background: #0a78d4;
}
.overflow svg {
  width: 26px;
  height: 26px;
}
.tray {
  flex: 1;
  display: flex;
  align-items: center;
  justify-content: flex-end;
  padding-right: 30px;
  font-size: 17px;
}
.hidden-icons svg {
  width: 18px;
  height: 18px;
}
.lang {
  margin: 0 28px 0 30px;
}
.status {
  gap: 12px;
}
.status svg {
  width: 24px;
  height: 24px;
}
.clock {
  width: 88px;
  margin: 0 10px;
  flex-direction: column;
  align-items: flex-end;
  line-height: 24px;
}
.bell svg {
  width: 24px;
  height: 26px;
}

/* translucent mark over player and taskbar */
.watermark {
  position: absolute;
  left: 0;
  right: 0;
  bottom: 16px;
  display: flex;
  flex-direction: column;
  align-items: center;
  pointer-events: none;
  color: rgba(196, 202, 202, 0.42);
}
.watermark .ar {
  font: bold 66px/80px "DejaVu Sans", sans-serif;
}
.watermark .en {
  font: bold 40px/44px "Liberation Sans", Arial, sans-serif;
}
```
